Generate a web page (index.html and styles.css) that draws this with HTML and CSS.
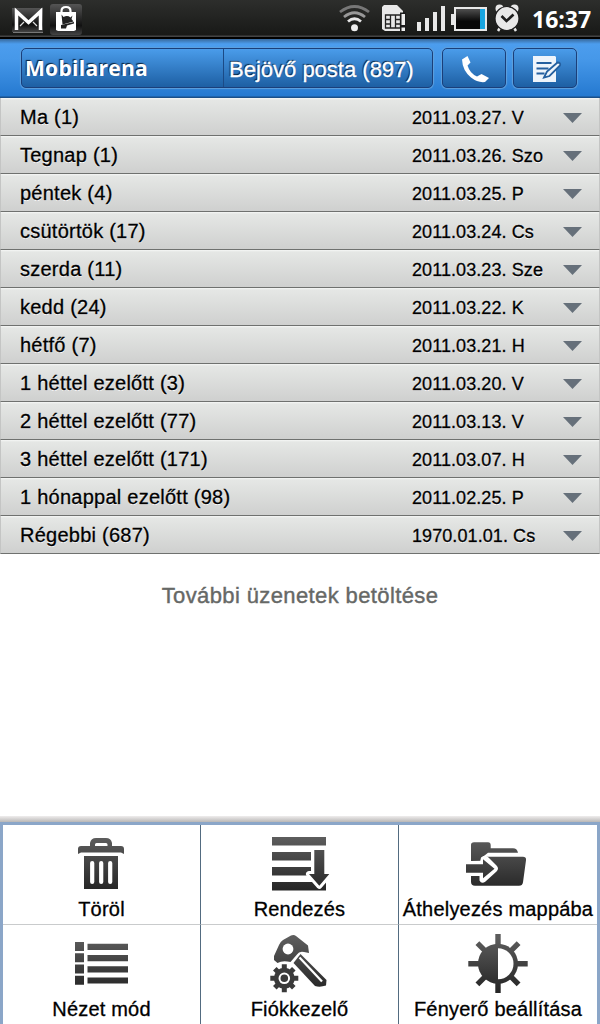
FILE: index.html
```html
<!DOCTYPE html>
<html lang="hu">

<head>
    <meta charset="UTF-8">
    <title>Bejövő posta</title>
    <link rel="stylesheet" href="styles.css">
</head>

<body>

    <div class="status">
        <svg class="notifications" width="90" height="36" viewBox="0 0 90 36">
            <defs>
                <linearGradient id="tile" x1="0" y1="0" x2="0" y2="1">
                    <stop offset="0" stop-color="#555" />
                    <stop offset="0.7" stop-color="#111" />
                    <stop offset="1" stop-color="#444" />
                </linearGradient>
            </defs>
            <rect x="12" y="8" width="31" height="24" fill="url(#tile)" />
            <path d="M13 32.500h30" stroke="#777" />
            <path d="M16.500 30V11.500L28.500 22.500L40.500 11.500V30" fill="none" stroke="#fff" stroke-width="3.500" />
            <path d="M20 26l4-4M37 26l-4-4" stroke="#ddd" stroke-width="1.200" />
            <rect x="50" y="4" width="32" height="31" rx="3" fill="url(#tile)" />
            <path d="M61.500 13v-2q0-4 4.500-4t4.500 4v2" fill="none" stroke="#fff" stroke-width="2.200" />
            <path d="M56 12h20v18l-2 1H58l-2-1z" fill="#fff" />
            <path d="M61.500 14.500l2 2.500q4-2 7 .500l2-2-1 3.500 2 2.500-11 3z" fill="#222" />
            <path d="M61 25l13-3v1.500l-7 2-1 3h-5z" fill="#222" />
        </svg>
        <svg class="indicators" width="190" height="36" viewBox="335 0 190 36">
            <defs>
                <linearGradient id="cell" x1="0" y1="0" x2="0" y2="1">
                    <stop offset="0" stop-color="#555" />
                    <stop offset="0.6" stop-color="#080808" />
                </linearGradient>
            </defs>
            <!-- wifi -->
            <g fill="none" stroke-width="2.800">
                <path d="M340 12q14.500-11 29 0" stroke="#777" />
                <path d="M344 17q10.500-8.500 21 0" stroke="#999" />
                <path d="M348 21.500q6.500-5.500 13 0" stroke="#e6e6e6" />
            </g>
            <circle cx="354.500" cy="27.700" r="3.500" fill="#eee" />
            <!-- sim card -->
            <path d="M384 5h13l6 6v20h-18l-3-2V7z" fill="#e8e8e8" />
            <path d="M385.500 15h15v13h-15zM390.500 15v13M395.500 15v13M385 19.500h5M385 24h5M395 19.500h5M395 24h5" fill="none" stroke="#222" stroke-width="1.300" />
            <path d="M400 12.500h6V32h-6z" fill="#1b1b1b" />
            <path d="M401.500 14h3.500v11h-3.500zM401.500 27.500h3.500V31h-3.500z" fill="#eee" />
            <!-- signal -->
            <path d="M417 22h4v9h-4zM425 18h4v13h-4zM433 12h4v19h-4zM441 6h4v25h-4z" fill="#e8e8e8" />
            <!-- battery -->
            <rect x="455" y="8" width="31" height="22" fill="url(#cell)" stroke="#e8e8e8" stroke-width="2" />
            <path d="M451 14h3v11h-3z" fill="#e8e8e8" />
            <path d="M480 9h5v20h-5z" fill="#18a5e0" />
            <!-- alarm -->
            <circle cx="499.500" cy="8.500" r="4" fill="#e8e8e8" />
            <circle cx="514.500" cy="8.500" r="4" fill="#e8e8e8" />
            <path d="M501 26l-3 5M513 26l3 5" stroke="#e8e8e8" stroke-width="2.500" />
            <circle cx="507" cy="18.500" r="12" fill="#e8e8e8" stroke="#1d1d1d" stroke-width="1.200" />
            <path d="M501.500 16l5 5 7-6.500" fill="none" stroke="#1d1d1d" stroke-width="2.600" />
        </svg>
        <span class="clock">16:37</span>
    </div>

    <header class="toolbar">
        <div class="tabs">
            <div class="account">Mobilarena</div>
            <div class="folder">Bejövő posta (897)</div>
        </div>
        <div class="button">
            <svg width="62" height="38" viewBox="443 49 62 38">
                <path d="M462 59.500l5.500-3.500 3 6.500-3 3q2.500 8 9.500 11l4.500-2.500 7.500 4-4 4q-7 1-14-4.500-8.500-7-9-18z" fill="#fff" />
            </svg>
        </div>
        <div class="button">
            <svg width="62" height="38" viewBox="514 49 62 38">
                <path d="M533 56h22l1 1v25h-23z" fill="#eef4fb" />
                <path d="M536.500 63h15M536.500 68.500h12M536.500 73.500h8" stroke="#245f9f" stroke-width="1.800" />
                <path d="M544 77.500l3-6 10.500-9q3.500 0 2.500 3L549.500 76z" fill="#eef4fb" stroke="#245f9f" stroke-width="1.800" />
            </svg>
        </div>
    </header>

    <ul class="days">
        <li><span class="day">Ma (1)</span><span class="date">2011.03.27. V</span><i class="arrow"></i></li>
        <li><span class="day">Tegnap (1)</span><span class="date">2011.03.26. Szo</span><i class="arrow"></i></li>
        <li><span class="day">péntek (4)</span><span class="date">2011.03.25. P</span><i class="arrow"></i></li>
        <li><span class="day">csütörtök (17)</span><span class="date">2011.03.24. Cs</span><i class="arrow"></i></li>
        <li><span class="day">szerda (11)</span><span class="date">2011.03.23. Sze</span><i class="arrow"></i></li>
        <li><span class="day">kedd (24)</span><span class="date">2011.03.22. K</span><i class="arrow"></i></li>
        <li><span class="day">hétfő (7)</span><span class="date">2011.03.21. H</span><i class="arrow"></i></li>
        <li><span class="day">1 héttel ezelőtt (3)</span><span class="date">2011.03.20. V</span><i class="arrow"></i></li>
        <li><span class="day">2 héttel ezelőtt (77)</span><span class="date">2011.03.13. V</span><i class="arrow"></i></li>
        <li><span class="day">3 héttel ezelőtt (171)</span><span class="date">2011.03.07. H</span><i class="arrow"></i></li>
        <li><span class="day">1 hónappal ezelőtt (98)</span><span class="date">2011.02.25. P</span><i class="arrow"></i></li>
        <li><span class="day">Régebbi (687)</span><span class="date">1970.01.01. Cs</span><i class="arrow"></i></li>
    </ul>

    <p class="more">További üzenetek betöltése</p>

    <div class="shadow"></div>
    <nav class="menu">
        <div class="item">
            <svg width="63" height="60" viewBox="0 0 63 60">
                <defs>
                    <linearGradient id="dark" gradientUnits="userSpaceOnUse" x1="0" y1="4" x2="0" y2="56">
                        <stop offset="0" stop-color="#5c5c5c" />
                        <stop offset="1" stop-color="#262626" />
                    </linearGradient>
                </defs>
                <path d="M8 20v-5q0-3 3-3h9V9q1-5 6-5h10q5 0 6 5v3h9q3 0 3 3v5l-3-1.500H11zM25 12h12.500V10.500q0-1.500-1.500-1.500h-9.500q-1.500 0-1.500 1.500z" fill="url(#dark)" fill-rule="evenodd" />
                <path d="M14 22h34v33H14z" fill="url(#dark)" />
                <path d="M22.200 29v19M31.200 29v19M40.200 29v19" stroke="#fff" stroke-width="4.200" stroke-linecap="round" />
            </svg>
            <span>Töröl</span>
        </div>
        <div class="item">
            <svg width="63" height="60" viewBox="0 0 63 60">
                <path d="M4 3h54v8.500H4zM4 18h39v8.500H4zM4 33h39v8.500H4zM4 48h54v8.500H4z" fill="url(#dark)" />
                <path d="M46.300 16h10v24h5L51.300 51.700 41 40h5.300z" fill="url(#dark)" stroke="#fff" stroke-width="6" stroke-linejoin="round" paint-order="stroke" />
            </svg>
            <span>Rendezés</span>
        </div>
        <div class="item">
            <svg width="64" height="60" viewBox="0 0 64 60">
                <path d="M5 27V11q0-2.700 3-2.700h14q2.700 0 2.700 3v3H47q4 0 5 4.400H22l-5 4v4z" fill="url(#dark)" />
                <path d="M18 22.700h39q3.500 0 3 3.500l-3 22q-.5 3.500-4 3.500H9q-4 0-4-4V42h10z" fill="url(#dark)" />
                <path d="M15 23.500q4-3.500 7.500 0l8 8q3 3 0 6l-11 10q-4 3-6-1v-5H0V28h14z" fill="#fff" />
                <path d="M0 30.300h17v-5L28.500 34.700 17 44.300v-5.600H0z" fill="url(#dark)" />
            </svg>
            <span>Áthelyezés mappába</span>
        </div>
        <div class="item">
            <svg width="63" height="60" viewBox="0 0 63 60">
                <path d="M5 8h9v9H5zM5 19.300h9v9H5zM5 30.500h9v9H5zM5 41.700h9v9H5zM17.500 9.700H58v6.300H17.500zM17.500 21H58v6.200H17.500zM17.500 32.200H58v6.200H17.500zM17.500 43.400H58v6.200H17.500z" fill="url(#dark)" />
            </svg>
            <span>Nézet mód</span>
        </div>
        <div class="item">
            <svg width="63" height="60" viewBox="0 0 63 60">
                <path d="M6 26v-4l5-11q1-3 4-5l8-4.500q3-1 5 .5l12 9.500 1 7.500-5-1q-5-1-7 2.500L22.500 28q-8-2-13 1z" fill="url(#dark)" />
                <circle cx="20" cy="15" r="5.400" fill="#fff" />
                <path d="M25.500 29l7-9 26 26-.5 5.500q-6 2-11 .5z" fill="url(#dark)" />
                <path d="M31.500 23.500l22.500 24" stroke="#fff" stroke-width="2.200" />
                <g transform="translate(16.300 44.300)">
                    <path d="M0-14V14M-14 0H14M-9.500-9.500L9.500 9.500M9.500-9.500L-9.500 9.500" stroke="#3a3a3a" stroke-width="5" />
                    <circle r="10.500" fill="#3a3a3a" />
                    <circle r="4.800" fill="#3a3a3a" stroke="#fff" stroke-width="2" />
                </g>
            </svg>
            <span>Fiókkezelő</span>
        </div>
        <div class="item">
            <svg width="64" height="60" viewBox="0 0 64 60">
                <path d="M29.300 0h5.400v59h-5.400zM2.300 27.100h59.400v5.400H2.300zM9.500 11l3.800-3.800 41.200 41.200-3.800 3.800zM50.700 7.200l3.800 3.800L13.300 52.200l-3.800-3.800z" fill="url(#dark)" />
                <circle cx="32" cy="29.700" r="20" fill="url(#dark)" />
                <path d="M32 14.200a15.500 15.500 0 0 1 0 31z" fill="#fff" />
            </svg>
            <span>Fényerő beállítása</span>
        </div>
    </nav>

</body>

</html>
```
FILE: styles.css
```css
* {
    box-sizing: border-box;
}

body {
    display: flex;
    flex-direction: column;
    width: 600px;
    height: 1024px;
    margin: 0;
    overflow: hidden;
    background-color: white;
    color: black;
    font-family: "Liberation Sans", Arial, sans-serif;
    font-size: 20px;
}

svg {
    display: block;
    flex: none;
}

.status {
    display: flex;
    align-items: flex-start;
    height: 39px;
    background: linear-gradient(#2d2e2c, #181917 35px, #444 36px, #444 37px, #000 37px);
}

.indicators {
    margin-left: 245px;
}

.clock {
    margin-left: 7px;
    color: white;
    font-family: "Open Sans", "Noto Sans", sans-serif;
    font-size: 23px;
    font-weight: bold;
    line-height: 39px;
}

.toolbar {
    display: flex;
    height: 59px;
    padding: 9px 0 0 21px;
    background: linear-gradient(#38699c, #4c9dee 5px, #4698e9 20px, #2579d0 57px, #1a4f88 58px);
    color: white;
}

.tabs,
.button {
    height: 40px;
    border: 1px solid #1b3f7a;
    border-radius: 5px;
    background: linear-gradient(#4a9cea, #1d5fa3);
    box-shadow: 0 0 1px 1px #5fa0dc;
}

.tabs {
    display: flex;
    width: 412px;
    margin-right: 9px;
    line-height: 38px;
    text-shadow: -1px -1px 1px #0a2038;
}

.account {
    width: 202px;
    padding-left: 3px;
    border-right: 1px solid #1b4a86;
    font-family: "Open Sans", "Noto Sans", sans-serif;
    font-size: 21px;
    font-weight: bold;
    letter-spacing: 0.3px;
}

.folder {
    padding-left: 5px;
    font-size: 22px;
    line-height: 41px;
    -webkit-text-stroke: 0.3px white;
}

.button {
    width: 64px;
    margin-right: 7px;
}

.days {
    margin: 0;
    padding: 0;
    list-style: none;
}

.days li {
    display: flex;
    align-items: center;
    height: 38px;
    padding-left: 19px;
    border: 1px solid #c4c5c4;
    border-width: 0 1px 1px;
    border-bottom-color: #6f716f;
    background: linear-gradient(#f6f7f6, #e5e7e5 2px, #cfd0cf);
    text-shadow: 0 1px 0 #fff;
    -webkit-text-stroke: 0.3px black;
}

.day {
    width: 392px;
    padding-top: 1px;
    letter-spacing: 0.25px;
}

.date {
    width: 151px;
    padding-top: 3px;
    font-size: 18px;
    letter-spacing: 0.08px;
}

.arrow {
    width: 19px;
    height: 10px;
    margin-top: 3px;
    background-color: #66707a;
    clip-path: polygon(0 0, 100% 0, 50% 100%);
}

.more {
    margin: 30px 0 0;
    color: #666866;
    font-size: 22px;
    line-height: 24px;
    letter-spacing: 0.38px;
    text-align: center;
    -webkit-text-stroke: 0.4px #666866;
}

.shadow {
    height: 6px;
    margin-top: auto;
    background: linear-gradient(#efeded, #b9b7b6);
}

.menu {
    display: grid;
    grid-template-columns: 198px 198px 198px;
    grid-template-rows: 100px 99px;
    height: 202px;
    border: 3px solid #8ba6c8;
    border-bottom: 0;
}

.item {
    display: flex;
    flex-direction: column;
    align-items: center;
    padding-top: 9px;
    border-right: 1px solid #526b80;
    border-bottom: 1px solid #c9cbcc;
    line-height: 30px;
    letter-spacing: 0.2px;
    white-space: nowrap;
    -webkit-text-stroke: 0.3px black;
}

.item:nth-child(3n) {
    border-right: 0;
}

.item:nth-child(n+4) {
    border-bottom: 0;
}
```
